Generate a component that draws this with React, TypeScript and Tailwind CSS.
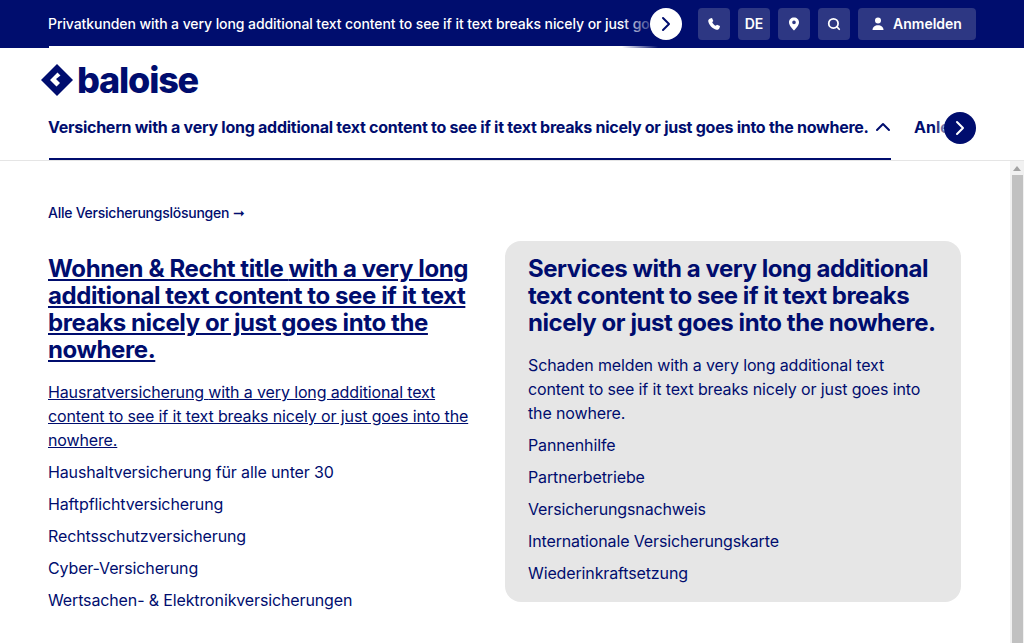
import { ChevronRight, ChevronUp, Search } from "lucide-react";

const font = "font-['Inter','Noto_Sans',sans-serif]";
const long = "with a very long additional text content to see if it text breaks nicely or just goes into the nowhere.";

const leftLinks = [
  "Haushaltversicherung für alle unter 30",
  "Haftpflichtversicherung",
  "Rechtsschutzversicherung",
  "Cyber-Versicherung",
  "Wertsachen- & Elektronikversicherungen",
];

const rightLinks = [
  "Pannenhilfe",
  "Partnerbetriebe",
  "Versicherungsnachweis",
  "Internationale Versicherungskarte",
  "Wiederinkraftsetzung",
];

function MetaButton({ children }: { children: React.ReactNode }) {
  return (
    <button className="flex h-8 w-8 items-center justify-center rounded bg-[#2d3783] text-sm font-semibold text-white">
      {children}
    </button>
  );
}

function TopBar() {
  return (
    <div className="relative flex h-12 shrink-0 items-center overflow-hidden bg-[#000d6e] px-12">
      <div className="relative h-12 min-w-0 flex-1 overflow-hidden">
        <div className="flex h-12 items-center whitespace-nowrap text-sm font-medium tracking-[-0.08px] text-white">
          Privatkunden {long}
        </div>
        <div className="absolute bottom-0 left-px h-0.5 w-full bg-white" />
        <div className="absolute right-0 top-0 h-12 w-[60px] bg-gradient-to-r from-transparent to-[#000d6e] to-60%" />
      </div>
      <button className="absolute left-[650px] top-2 flex h-8 w-8 items-center justify-center rounded-full bg-white text-[#000d6e]">
        <ChevronRight size={24} strokeWidth={2} />
      </button>
      <div className="ml-4 flex shrink-0 gap-2">
        <MetaButton>
          <svg width="14" height="14" viewBox="0 0 14 14" aria-hidden="true">
            <path
              d="M3.2 1.5 L5 1 L6.3 4 L5.2 5.3 C5.8 6.8 7.2 8.2 8.7 8.8 L10 7.7 L13 9 L12.5 11 C12 12.4 10.8 13 9.5 12.7 C5.5 11.8 2.2 8.5 1.3 4.5 C1 3.2 1.8 2 3.2 1.5Z"
              fill="white"
            />
          </svg>
        </MetaButton>
        <MetaButton>DE</MetaButton>
        <MetaButton>
          <svg width="14" height="14" viewBox="0 0 14 14" aria-hidden="true">
            <path
              d="M7 0.5 C9.9 0.5 12 2.6 12 5.3 C12 8.3 9 11.5 7 13.5 C5 11.5 2 8.3 2 5.3 C2 2.6 4.1 0.5 7 0.5Z M7 3.6 A1.8 1.8 0 1 0 7 7.2 A1.8 1.8 0 1 0 7 3.6Z"
              fill="white"
              fillRule="evenodd"
            />
          </svg>
        </MetaButton>
        <MetaButton>
          <Search size={14} strokeWidth={3} />
        </MetaButton>
        <button className="flex h-8 w-[118px] items-center justify-center gap-[7px] rounded bg-[#2d3783] pr-[2px] text-sm font-semibold text-white">
          <svg width="16" height="16" viewBox="0 0 16 16" aria-hidden="true">
            <circle cx="8" cy="4.6" r="3" fill="white" />
            <path d="M2.5 14 C2.5 11 5 9.3 8 9.3 C11 9.3 13.5 11 13.5 14 Z" fill="white" />
          </svg>
          Anmelden
        </button>
      </div>
    </div>
  );
}

function Logo() {
  return (
    <div className="flex h-[64px] shrink-0 items-center pl-[41px]">
      <svg width="32" height="32" viewBox="0 0 32 32" aria-hidden="true">
        <path
          d="M16 0 L32 16 L16 32 L0 16 Z M16.5 8.5 L9 16 L15.5 22.5 L19 19 L15 15 L19.5 11.5 Z"
          fill="#000d6e"
          fillRule="evenodd"
        />
      </svg>
      <span className="ml-[4px] text-[36px] font-extrabold leading-none tracking-[-1.2px] text-[#000d6e]">baloise</span>
    </div>
  );
}

function NavBar() {
  return (
    <div className="relative flex h-[49px] shrink-0 border-b border-[#e5e5e5] pl-12">
      <div className="relative h-[48px] w-[843px] shrink-0 text-base font-bold tracking-[-0.26px] text-[#000d6e]">
        <div className="flex h-[30px] items-center gap-[2px]">
          <span className="whitespace-nowrap">Versichern {long}</span>
          <ChevronUp size={24} strokeWidth={2} className="shrink-0" />
        </div>
        <div className="absolute bottom-0 left-px right-0 h-0.5 bg-[#000d6e]" />
      </div>
      <div className="relative ml-[23px] flex h-[30px] w-[40px] items-center overflow-hidden text-base font-bold text-[#000d6e]">
        Anle
        <div className="absolute right-0 top-0 h-[30px] w-5 bg-gradient-to-r from-transparent to-white" />
      </div>
      <button className="absolute left-[944px] top-0 flex h-8 w-8 items-center justify-center rounded-full bg-[#000d6e] text-white">
        <ChevronRight size={24} strokeWidth={2} />
      </button>
    </div>
  );
}

function Scrollbar() {
  return (
    <div className="flex w-[14px] shrink-0 flex-col items-center bg-[#f1f1f1]">
      <div className="mt-[5px] h-0 w-0 border-x-[4px] border-b-[5px] border-x-transparent border-b-[#a3a3a3]" />
      <div className="mt-[4px] w-[11px] flex-1 bg-[#c1c1c1]" />
    </div>
  );
}

export default function App() {
  return (
    <div className={`flex h-[643px] w-[1024px] flex-col overflow-hidden bg-white ${font}`}>
      <TopBar />
      <Logo />
      <NavBar />
      <div className="flex min-h-0 flex-1">
        <main className="flex-1 px-12 pt-[39px] text-[#000d6e]">
          <a className="text-sm font-medium leading-[18px] tracking-[-0.25px]">Alle Versicherungslösungen ➞</a>
          <div className="mt-[17px] flex items-start">
            <div className="w-[433px] shrink-0 pt-[14px]">
              <h2 className="text-2xl font-bold leading-[27px] tracking-[-0.4px] underline underline-offset-2">
                Wohnen &amp; Recht title {long}
              </h2>
              <ul className="mt-[17px] flex flex-col gap-2 text-base leading-6 tracking-[-0.13px]">
                <li className="underline">Hausratversicherung {long}</li>
                {leftLinks.map((link) => (
                  <li key={link}>{link}</li>
                ))}
              </ul>
            </div>
            <div className="ml-6 w-[456px] shrink-0 rounded-2xl bg-[#e6e6e6] pb-[17px] pl-[23px] pr-[12px] pt-[14px]">
              <h2 className="text-2xl font-bold leading-[27px] tracking-[-0.45px]">Services {long}</h2>
              <ul className="mt-[17px] flex flex-col gap-2 pr-[12px] text-base leading-6 tracking-[-0.13px]">
                <li>Schaden melden {long}</li>
                {rightLinks.map((link) => (
                  <li key={link}>{link}</li>
                ))}
              </ul>
            </div>
          </div>
        </main>
        <Scrollbar />
      </div>
    </div>
  );
}
